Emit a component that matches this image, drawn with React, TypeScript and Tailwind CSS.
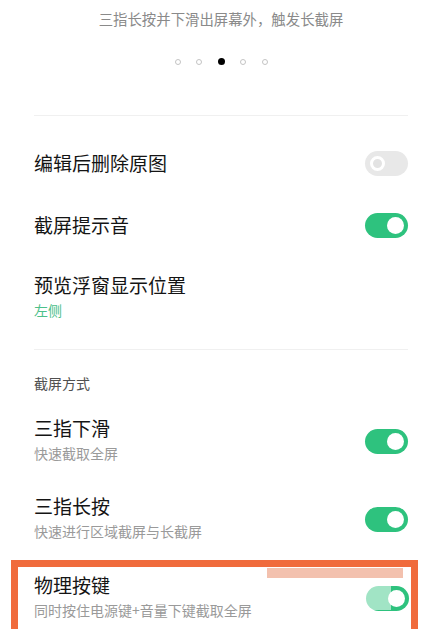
import React from "react";

const font = { fontFamily: '"Noto Sans CJK SC", "Noto Sans", sans-serif' };

function Toggle({ on }: { on: boolean }) {
  return on ? (
    <div className="w-[43px] h-[25px] rounded-full bg-[#2ec27e] flex items-center justify-end pr-[4px] shrink-0">
      <div className="w-[17px] h-[17px] rounded-full bg-white" />
    </div>
  ) : (
    <div className="w-[43px] h-[25px] rounded-full bg-[#e8e8e8] flex items-center justify-start pl-[5px] shrink-0">
      <div className="w-[15px] h-[15px] rounded-full border-[3px] border-white bg-[#e3e3e3]" />
    </div>
  );
}

function Row2({ title, sub, on }: { title: string; sub: string; on: boolean }) {
  return (
    <div className="flex items-center justify-between">
      <div className="flex flex-col gap-[2px]">
        <div className="text-[19px] leading-[26px] text-[#141414]">{title}</div>
        <div className="text-[14px] leading-[20px] text-[#9a9a9a]">{sub}</div>
      </div>
      <div className="mt-[4px]">
        <Toggle on={on} />
      </div>
    </div>
  );
}

export default function App() {
  const dots = [false, false, true, false, false];
  return (
    <div className="w-[425px] h-[629px] overflow-hidden bg-white relative" style={font}>
      <div className="pl-[34px] pr-[17px]">
        <div className="pt-[9px] text-center text-[14.4px] leading-[20px] text-[#8a8a8a]">
          三指长按并下滑出屏幕外，触发长截屏
        </div>
        <div className="mt-[29px] flex justify-center gap-[15.5px]">
          {dots.map((a, i) =>
            a ? (
              <div key={i} className="w-[7px] h-[7px] rounded-full bg-black" />
            ) : (
              <div key={i} className="w-[6px] h-[6px] my-[0.5px] rounded-full border border-[#c4c4c4]" />
            )
          )}
        </div>
        <div className="mt-[50px] h-px bg-[#f0f0f0]" />
        <div className="mt-[16px] h-[62px] flex items-center justify-between">
          <div className="text-[19px] leading-[26px] text-[#141414]">编辑后删除原图</div>
          <Toggle on={false} />
        </div>
        <div className="h-[62px] flex items-center justify-between">
          <div className="text-[19px] leading-[26px] text-[#141414]">截屏提示音</div>
          <Toggle on={true} />
        </div>
        <div className="pt-[16px] flex flex-col gap-[2px]">
          <div className="text-[19px] leading-[26px] text-[#141414]">预览浮窗显示位置</div>
          <div className="text-[14px] leading-[20px] text-[#4cc08a]">左侧</div>
        </div>
        <div className="mt-[29px] h-px bg-[#f0f0f0]" />
        <div className="mt-[23px] text-[14px] leading-[20px] text-[#505050]">截屏方式</div>
        <div className="mt-[22px]">
          <Row2 title="三指下滑" sub="快速截取全屏" on={true} />
        </div>
        <div className="mt-[30px]">
          <Row2 title="三指长按" sub="快速进行区域截屏与长截屏" on={true} />
        </div>
      </div>
      <div className="mt-[19px] ml-[11px] mr-[7px] border-[7px] border-[#f06b3c] pl-[16px] pr-[2px] pt-[5px] pb-[30px] relative">
        <Row2 title="物理按键" sub="同时按住电源键+音量下键截取全屏" on={true} />
        <div className="absolute left-[249px] top-[1px] w-[136px] h-[10px] bg-[#f3c1ae]" />
        <div className="absolute left-[247px] top-[11px] w-[96px] h-[32px] bg-white/90" />
        <div className="absolute left-[343px] top-[11px] w-[30px] h-[32px] bg-white/55" />
      </div>
    </div>
  );
}
